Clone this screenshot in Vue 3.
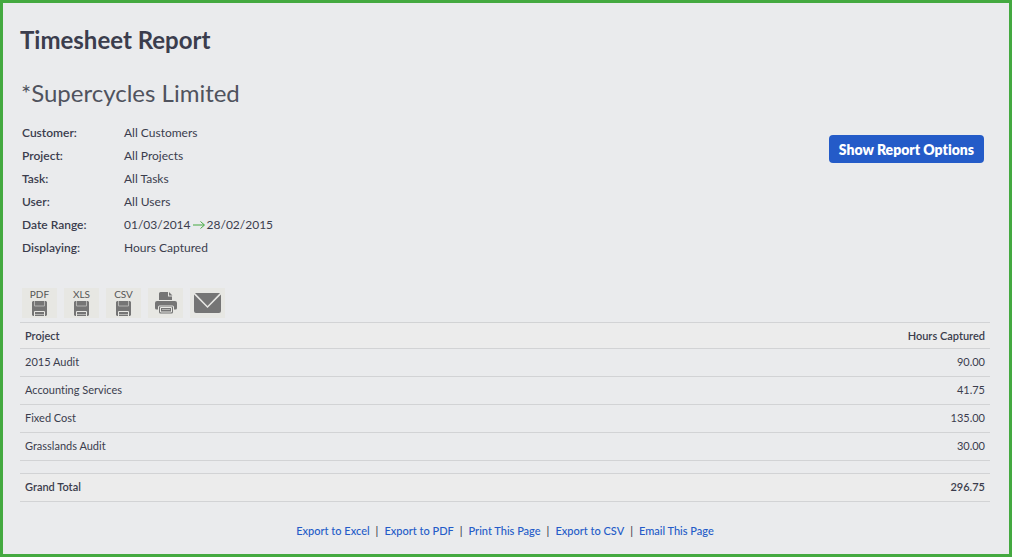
<template>
  <main class="report">
    <h1 class="title">Timesheet Report</h1>
    <h2 class="company">*Supercycles Limited</h2>

    <section class="summary">
      <dl class="filters">
        <div class="filter" v-for="filter in filters" :key="filter.label">
          <dt>{{ filter.label }}:</dt>
          <dd v-if="filter.to" class="range">
            <span>{{ filter.value }}</span>
            <svg class="arrow" viewBox="0 0 12 8" width="12" height="8" aria-hidden="true">
              <path d="M0 4h11M7.500 0.500L11.500 4L7.500 7.500" />
            </svg>
            <span>{{ filter.to }}</span>
          </dd>
          <dd v-else>{{ filter.value }}</dd>
        </div>
      </dl>
      <button class="options" type="button">Show Report Options</button>
    </section>

    <div class="tools">
      <button class="tool" type="button" v-for="format in formats" :key="format" :aria-label="'Export to ' + format">
        <span>{{ format }}</span>
        <svg viewBox="0 0 15 15" width="15" height="15" aria-hidden="true">
          <path d="M1 0h13l1 1v13l-1 1H1l-1-1V1z" />
          <path class="soft" d="M2.500 0v5h10V0" />
          <path class="line" d="M2.500 15v-4.500h10V15" />
          <path class="soft" d="M3 13.500h9" />
        </svg>
      </button>
      <button class="tool" type="button" aria-label="Print">
        <svg viewBox="0 0 22 22" width="22" height="22" aria-hidden="true">
          <path d="M4 8V1.500Q4 0 5.500 0H13v4.500h4V8zM14 0l3.500 3.500H14z" />
          <path d="M2 9h18q2 0 2 2v5q0 1.500-1.500 1.500H19V15q0-1.500-1.500-1.500h-13Q3 13.500 3 15v2.500H1.500Q0 17.500 0 16v-5q0-2 2-2z" />
          <path d="M4 14.500h14V20q0 1.500-1.500 1.500h-11Q4 21.500 4 20z" />
          <path class="line" d="M5.500 15.500h11v4.500h-11z" />
          <path class="soft" d="M7 17.500h8" />
        </svg>
      </button>
      <button class="tool" type="button" aria-label="Email">
        <svg viewBox="0 0 27 20" width="27" height="20" aria-hidden="true">
          <path d="M1 0h25L13.500 13z" />
          <path d="M0 1.500L13.500 15L27 1.500V18q0 2-2 2H2q-2 0-2-2z" />
        </svg>
      </button>
    </div>

    <table class="hours">
      <thead>
        <tr>
          <th>Project</th>
          <th>Hours Captured</th>
        </tr>
      </thead>
      <tbody>
        <tr v-for="row in rows" :key="row.project">
          <td>{{ row.project }}</td>
          <td>{{ row.hours }}</td>
        </tr>
        <tr class="spacer">
          <td colspan="2"></td>
        </tr>
      </tbody>
      <tfoot>
        <tr>
          <th>Grand Total</th>
          <td>296.75</td>
        </tr>
      </tfoot>
    </table>

    <nav class="links">
      <template v-for="(link, index) in links" :key="link">
        <span v-if="index > 0">|</span>
        <a href="#">{{ link }}</a>
      </template>
    </nav>
  </main>
</template>

<script setup>
const filters = [
  { label: 'Customer', value: 'All Customers' },
  { label: 'Project', value: 'All Projects' },
  { label: 'Task', value: 'All Tasks' },
  { label: 'User', value: 'All Users' },
  { label: 'Date Range', value: '01/03/2014', to: '28/02/2015' },
  { label: 'Displaying', value: 'Hours Captured' },
];

const formats = ['PDF', 'XLS', 'CSV'];

const rows = [
  { project: '2015 Audit', hours: '90.00' },
  { project: 'Accounting Services', hours: '41.75' },
  { project: 'Fixed Cost', hours: '135.00' },
  { project: 'Grasslands Audit', hours: '30.00' },
];

const links = ['Export to Excel', 'Export to PDF', 'Print This Page', 'Export to CSV', 'Email This Page'];
</script>

<style>
body {
  margin: 0;
  background: #eaebed;
}
</style>

<style scoped>
.report {
  box-sizing: border-box;
  min-height: 100vh;
  padding: 21px 19px 14px 17px;
  border: 3px solid #44a940;
  background: #eaebed;
  color: #3b3d4d;
  font-family: Lato, "Open Sans", sans-serif;
  font-size: 12px;
  font-variant-ligatures: none;
}

.title {
  margin: 0;
  font-size: 24px;
  font-weight: 700;
  line-height: 32px;
}

.company {
  margin: 21px 0 12px 1px;
  color: #50535e;
  font-size: 24px;
  font-weight: 400;
  line-height: 32px;
}

.summary {
  display: flex;
  justify-content: space-between;
  align-items: flex-start;
  padding: 0 6px 0 2px;
}

.filters {
  margin: 0;
}

.filter {
  display: flex;
  line-height: 23px;
}

.filter dt {
  width: 102px;
  font-weight: 600;
}

.filter dd {
  margin: 0;
}

.filter .range {
  display: flex;
  align-items: center;
  gap: 2px;
}

.arrow {
  fill: none;
  stroke: #44a940;
}

.options {
  height: 28px;
  margin-top: 14px;
  padding: 0 10px;
  border: 0;
  border-radius: 4px;
  background: #245bc8;
  color: #fff;
  font-family: inherit;
  font-size: 14px;
  font-weight: 800;
  font-variant-ligatures: none;
}

.tools {
  display: flex;
  gap: 7px;
  margin: 29px 0 4px 2px;
}

.tool {
  display: flex;
  flex-direction: column;
  align-items: center;
  justify-content: center;
  width: 35px;
  height: 30px;
  padding: 0;
  border: 0;
  background: #e7e7e3;
  color: #555;
  font-family: inherit;
  font-size: 10px;
  line-height: 12px;
}

.tool span {
  margin: -2px 0 1px;
}

.tool svg {
  fill: #757575;
}

.tool .line,
.tool .soft {
  fill: none;
  stroke: #e7e7e3;
}

.tool .soft {
  stroke: #b4b4b2;
}

.hours {
  width: 100%;
  border-collapse: separate;
  border-spacing: 0;
  border-top: 1px solid #d2d3d5;
}

.hours th,
.hours td {
  box-sizing: border-box;
  height: 28px;
  padding: 0 5px 1px;
  border-bottom: 1px solid #d2d3d5;
  font-size: 11px;
  font-weight: 400;
  line-height: 16px;
  text-align: right;
}

.hours th:first-child,
.hours td:first-child {
  text-align: left;
}

.hours thead th {
  height: 26px;
  padding-bottom: 0;
}

.hours thead th,
.hours tfoot th,
.hours tfoot td {
  background: #ececec;
  font-weight: 600;
}

.hours .spacer td {
  height: 13px;
  line-height: 0;
}

.links {
  display: flex;
  justify-content: center;
  gap: 6px;
  margin-top: 21px;
  font-size: 11px;
  font-weight: 500;
  line-height: 16px;
}

.links a {
  color: #245bc8;
  text-decoration: none;
}
</style>
